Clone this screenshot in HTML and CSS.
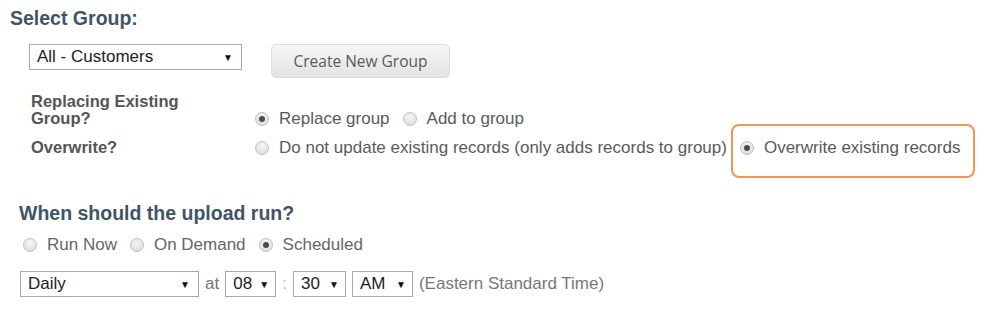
FILE: index.html
```html
<!DOCTYPE html>
<html lang="en">
<head>
  <meta charset="UTF-8" />
  <title>Upload Settings</title>
  <link rel="stylesheet" href="styles.css">
</head>
<body>
  <div class="page">
    <h3 class="section-title">Select Group:</h3>
    <div class="group-body">
      <div class="group-row">
        <div class="fake-select group-select">
          <span>All - Customers</span>
          <span class="arrow">&#9660;</span>
        </div>
        <button class="btn-grey">Create New Group</button>
      </div>

      <div class="options">
        <div class="opt-label">Replacing Existing<br>Group?</div>
        <div class="opt-values">
          <label class="radio checked"><span class="dot"></span>Replace group</label>
          <label class="radio"><span class="dot"></span>Add to group</label>
        </div>

        <div class="opt-label">Overwrite?</div>
        <div class="opt-values">
          <label class="radio"><span class="dot"></span>Do not update existing records (only adds records to group)</label>
          <label class="radio checked highlight"><span class="dot"></span>Overwrite existing records</label>
        </div>
      </div>
    </div>

    <h3 class="section-title run-title">When should the upload run?</h3>
    <div class="run-body">
      <div class="run-options">
        <label class="radio"><span class="dot"></span>Run Now</label>
        <label class="radio"><span class="dot"></span>On Demand</label>
        <label class="radio checked"><span class="dot"></span>Scheduled</label>
      </div>
      <div class="schedule-row">
        <div class="fake-select freq-select">
          <span>Daily</span>
          <span class="arrow">&#9660;</span>
        </div>
        <span class="muted">at</span>
        <div class="fake-select hour-select">
          <span>08</span>
          <span class="arrow">&#9660;</span>
        </div>
        <span class="colon">:</span>
        <div class="fake-select min-select">
          <span>30</span>
          <span class="arrow">&#9660;</span>
        </div>
        <div class="fake-select ampm-select">
          <span>AM</span>
          <span class="arrow">&#9660;</span>
        </div>
        <span class="muted tz">(Eastern Standard Time)</span>
      </div>
    </div>
  </div>
</body>
</html>
```

FILE: styles.css
```css
body {
  font-family: "Liberation Sans", Arial, sans-serif;
  background: #ffffff;
  color: #555;
  margin: 0;
}

.page {
  padding: 7px 0 0 10px;
}

.section-title {
  font-size: 19.5px;
  font-weight: bold;
  color: #3f5466;
  margin: 0;
  line-height: 22px;
}

/* select group */
.group-body {
  padding-left: 19px;
  margin-top: 15px;
}

.group-row {
  display: flex;
  align-items: flex-start;
  gap: 29px;
}

.fake-select {
  display: flex;
  align-items: center;
  justify-content: space-between;
  height: 26px;
  box-sizing: border-box;
  border: 1px solid #a9a9a9;
  background: #fff;
  color: #222;
  font-size: 17px;
  padding: 0 8px 0 7px;
}

.fake-select .arrow {
  font-size: 10px;
  color: #111;
}

.group-select {
  width: 213px;
}

.btn-grey {
  width: 179px;
  height: 34px;
  border: 1px solid #dcdcdc;
  border-radius: 5px;
  background: linear-gradient(#f6f6f6, #e3e3e3);
  font-family: "Open Sans", sans-serif;
  font-size: 15.5px;
  color: #5a5a5a;
  padding: 0;
}

.options {
  display: grid;
  grid-template-columns: 226px auto;
  align-items: end;
  row-gap: 12px;
  margin-top: 15px;
}

.opt-label {
  padding-left: 2px;
  font-weight: bold;
  font-size: 16.5px;
  line-height: 17px;
  color: #555;
}

.opt-values {
  display: flex;
  align-items: center;
  font-size: 17px;
  line-height: 16px;
  color: #5a5a5a;
  white-space: nowrap;
}

/* radios */
.radio {
  display: flex;
  align-items: center;
  margin-right: 13px;
  position: relative;
}

.dot {
  width: 14px;
  height: 14px;
  box-sizing: border-box;
  border: 1px solid #c2c2c2;
  border-radius: 50%;
  background: radial-gradient(circle at 50% 35%, #f7f7f7, #d6d6d6);
  margin-right: 10px;
  display: flex;
  align-items: center;
  justify-content: center;
}

.radio.checked .dot::after {
  content: "";
  width: 6px;
  height: 6px;
  border-radius: 50%;
  background: #4a4a4a;
}

.highlight::before {
  content: "";
  position: absolute;
  left: -9px;
  right: -15px;
  top: -16px;
  bottom: -22px;
  border: 2px solid #f5964c;
  border-radius: 8px;
}

/* upload schedule */
.run-title {
  margin: 46px 0 0 9px;
}

.run-body {
  padding-left: 10px;
}

.run-options {
  display: flex;
  align-items: center;
  margin: 11px 0 0 3px;
  font-size: 17px;
  line-height: 20px;
  color: #666;
}

.schedule-row {
  display: flex;
  align-items: center;
  gap: 6px;
  margin-top: 16px;
  font-size: 17px;
}

.freq-select {
  width: 179px;
}

.hour-select {
  width: 51px;
  padding: 0 6px 0 7px;
}

.min-select {
  width: 53px;
  padding: 0 6px 0 7px;
}

.ampm-select {
  width: 61px;
  padding: 0 6px 0 7px;
}

.muted {
  color: #777;
}

.colon {
  color: #bbb;
}

.tz {
  font-size: 17px;
}
```
